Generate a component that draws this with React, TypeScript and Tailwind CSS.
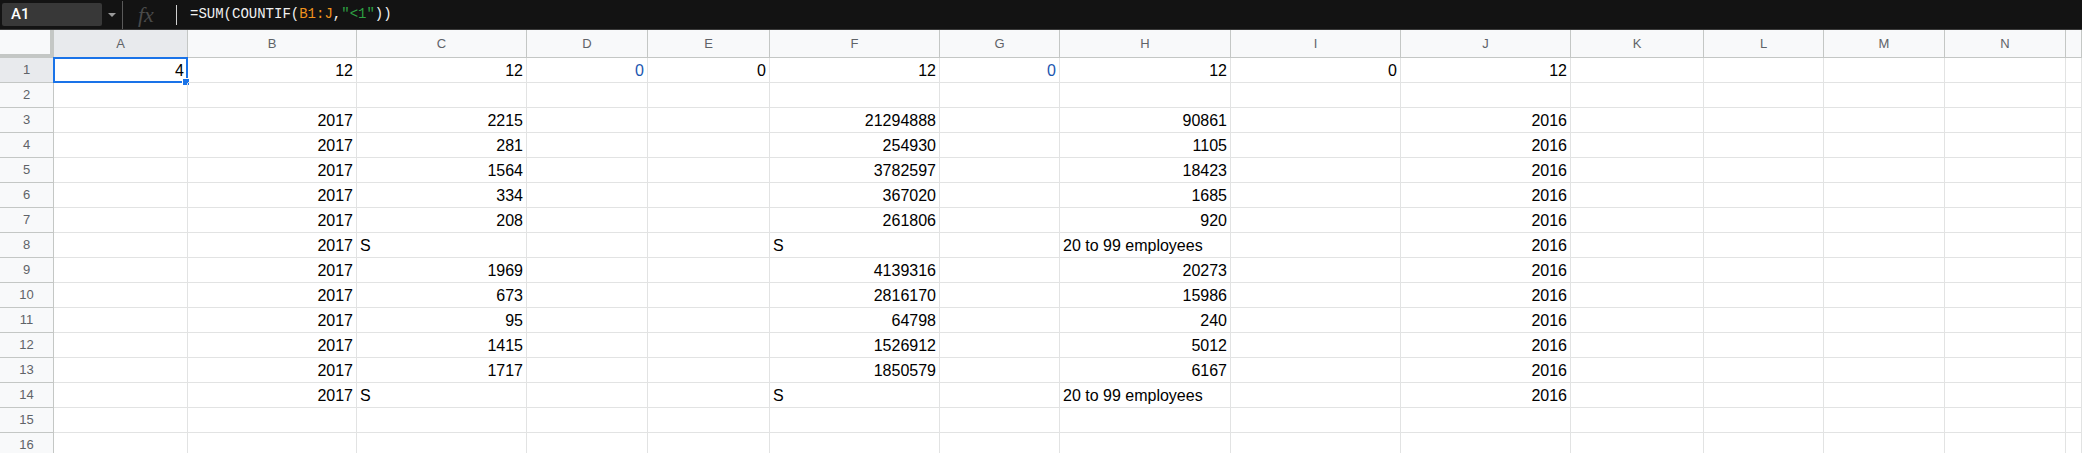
import React from "react";

const letters = ["A", "B", "C", "D", "E", "F", "G", "H", "I", "J", "K", "L", "M", "N", ""];

type Cell = { v: string; left?: boolean; blue?: boolean } | null;

const n = (v: string): Cell => ({ v });
const s = (v: string): Cell => ({ v, left: true });

const dataRows: [string, string, string, string, string][] = [
  ["2215", "21294888", "90861", "", ""],
  ["281", "254930", "1105", "", ""],
  ["1564", "3782597", "18423", "", ""],
  ["334", "367020", "1685", "", ""],
  ["208", "261806", "920", "", ""],
  ["S", "S", "20 to 99 employees", "", ""],
  ["1969", "4139316", "20273", "", ""],
  ["673", "2816170", "15986", "", ""],
  ["95", "64798", "240", "", ""],
  ["1415", "1526912", "5012", "", ""],
  ["1717", "1850579", "6167", "", ""],
  ["S", "S", "20 to 99 employees", "", ""],
];

const rows: Cell[][] = [
  [
    n("4"),
    n("12"),
    n("12"),
    { v: "0", blue: true },
    n("0"),
    n("12"),
    { v: "0", blue: true },
    n("12"),
    n("0"),
    n("12"),
    null,
    null,
    null,
    null,
    null,
  ],
  Array(15).fill(null),
  ...dataRows.map(([c, f, h]) => {
    const text = isNaN(Number(c));
    return [
      null,
      n("2017"),
      text ? s(c) : n(c),
      null,
      null,
      text ? s(f) : n(f),
      null,
      text ? s(h) : n(h),
      null,
      n("2016"),
      null,
      null,
      null,
      null,
      null,
    ];
  }),
  Array(15).fill(null),
  Array(15).fill(null),
];

const grid =
  "grid grid-cols-[54px_134px_169px_170px_121px_122px_170px_120px_171px_170px_170px_133px_120px_121px_121px_1fr]";

function FormulaBar() {
  return (
    <div className="flex h-[30px] items-center bg-[#131313] border-b border-[#3a3a3a]">
      <div className="ml-[2px] flex h-[23px] w-[100px] items-center rounded-[2px] bg-[#383838] pl-[9px] font-['Roboto',sans-serif] text-[15px] font-medium text-white">
        A1
      </div>
      <div className="ml-[6px] h-0 w-0 border-x-[4px] border-t-[4px] border-x-transparent border-t-[#9a9a9a]" />
      <div className="ml-[6px] h-[28px] w-px bg-[#5a5a5a]" />
      <div className="ml-[15px] w-[22px] font-['Liberation_Serif',serif] text-[22px] italic leading-none text-[#4a4a4a]">
        fx
      </div>
      <div className="ml-[16px] h-[20px] w-px bg-[#d0d0d0]" />
      <div className="ml-[13px] whitespace-pre font-['Liberation_Mono',monospace] text-[14px] text-[#f1f1f1]">
        =SUM(COUNTIF(<span className="text-[#f0921e]">B1:J</span>,
        <span className="text-[#2ea043]">"&lt;1"</span>))
      </div>
    </div>
  );
}

function HeaderRow() {
  return (
    <div className={`${grid} h-[28px]`}>
      <div className="border-r-4 border-b-4 border-[#c4c7c5] bg-[#f8f9fa]" />
      {letters.map((l, i) => (
        <div
          key={i}
          className={`flex items-center justify-center border-r border-b border-[#c4c7c5] font-['Liberation_Sans',sans-serif] text-[13px] text-[#5f6368] ${
            i === 0 ? "bg-[#e8eaed]" : "bg-[#f8f9fa]"
          }`}
        >
          {l}
        </div>
      ))}
    </div>
  );
}

export default function App() {
  return (
    <div className="h-[453px] w-[2082px] overflow-hidden bg-white font-['Liberation_Sans',Arial,sans-serif]">
      <FormulaBar />
      <HeaderRow />
      {rows.map((row, r) => (
        <div key={r} className={`${grid} h-[25px]`}>
          <div
            className={`flex items-center justify-center border-r border-b border-[#c4c7c5] text-[13px] text-[#5f6368] ${
              r === 0 ? "bg-[#e8eaed]" : "bg-[#f8f9fa]"
            }`}
          >
            {r + 1}
          </div>
          {row.map((c, i) => (
            <div
              key={i}
              className={`relative border-r border-b border-[#e2e3e3] whitespace-nowrap px-[3px] pt-[1px] text-[16px] leading-[23px] ${
                c && c.left ? "text-left" : "text-right"
              } ${c && c.blue ? "text-[#1a56b0]" : "text-black"}`}
            >
              {c ? c.v : ""}
              {r === 0 && i === 0 && (
                <>
                  <div className="absolute -left-px -top-px -right-px -bottom-px border-2 border-[#1a73e8]" />
                  <div className="absolute -right-[3px] -bottom-[4px] h-[8px] w-[8px] border border-white bg-[#1a73e8]" />
                </>
              )}
            </div>
          ))}
        </div>
      ))}
    </div>
  );
}
